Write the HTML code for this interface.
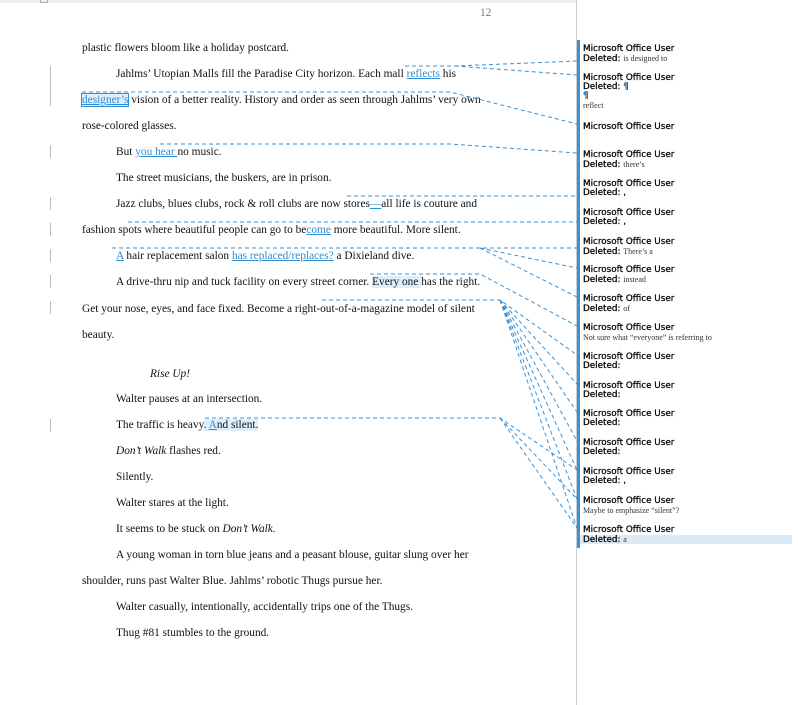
<!DOCTYPE html>
<html><head><meta charset="utf-8"><style>
body{margin:0;width:798px;height:705px;background:#fff;position:relative;overflow:hidden;font-family:"Liberation Serif",serif;}
.t{position:absolute;font-size:11.35px;color:#111;white-space:nowrap;line-height:12px;}
.b{color:#2d8fd5;text-decoration:underline;}
.cb{position:absolute;left:50px;width:1px;background:#bbb;}
.c{position:absolute;left:583px;font-family:"DejaVu Sans","Liberation Sans",sans-serif;font-size:8.8px;line-height:9px;color:#000;white-space:nowrap;-webkit-text-stroke:0.25px #000;}
.c .s{font-family:"Liberation Serif",serif;font-size:8px;color:#333;-webkit-text-stroke:0;}
</style></head><body>
<div style="position:absolute;left:0;top:0;width:576px;height:3px;background:#eee"></div>
<div style="position:absolute;left:40px;top:0;width:6px;height:2px;border:1px solid #aaa;border-top:none"></div>
<div class="t" style="left:480px;top:7px;color:#777">12</div>
<div style="position:absolute;left:576px;top:0;width:1px;height:705px;background:#ccc"></div>
<div style="position:absolute;left:577px;top:40px;width:3px;height:508px;background:#3a92d4"></div>

<div class="cb" style="top:66px;height:40px"></div>
<div class="cb" style="top:145px;height:13px"></div>
<div class="cb" style="top:197px;height:13px"></div>
<div class="cb" style="top:223px;height:13px"></div>
<div class="cb" style="top:249px;height:13px"></div>
<div class="cb" style="top:275px;height:13px"></div>
<div class="cb" style="top:301px;height:13px"></div>
<div class="cb" style="top:419px;height:13px"></div>

<div class="t" style="left:82px;top:42px">plastic flowers bloom like a holiday postcard.</div>
<div class="t" style="left:116px;top:68px">Jahlms’ Utopian Malls fill the Paradise City horizon. Each mall <span class="b">reflects</span> his</div>
<div class="t" style="left:82px;top:94px"><span class="b" style="outline:1px solid #2d8fd5;background:#dfeef9">designer’s</span> vision of a better reality. History and order as seen through Jahlms’ very own</div>
<div class="t" style="left:82px;top:120px">rose-colored glasses.</div>
<div class="t" style="left:116px;top:146px">But <span class="b">you hear </span>no music.</div>
<div class="t" style="left:116px;top:172px">The street musicians, the buskers, are in prison.</div>
<div class="t" style="left:116px;top:198px">Jazz clubs, blues clubs, rock &amp; roll clubs are now stores<span class="b">—</span>all life is couture and</div>
<div class="t" style="left:82px;top:224px">fashion spots where beautiful people can go to be<span class="b">come</span> more beautiful. More silent.</div>
<div class="t" style="left:116px;top:250px"><span class="b">A</span> hair replacement salon <span class="b">has replaced/replaces?</span> a Dixieland dive.</div>
<div class="t" style="left:116px;top:276px">A drive-thru nip and tuck facility on every street corner. <span style="background:#dfeef9">Every one </span>has the right.</div>
<div class="t" style="left:82px;top:303px">Get your nose, eyes, and face fixed. Become a right-out-of-a-magazine model of silent</div>
<div class="t" style="left:82px;top:329px">beauty.</div>
<div class="t" style="left:150px;top:368px;font-style:italic">Rise Up!</div>
<div class="t" style="left:116px;top:393px">Walter pauses at an intersection.</div>
<div class="t" style="left:116px;top:419px">The traffic is heavy<span style="background:#dfeef9">. <span class="b">A</span>nd silent.</span></div>
<div class="t" style="left:116px;top:445px"><i>Don’t Walk</i> flashes red.</div>
<div class="t" style="left:116px;top:471px">Silently.</div>
<div class="t" style="left:116px;top:497px">Walter stares at the light.</div>
<div class="t" style="left:116px;top:523px">It seems to be stuck on <i>Don’t Walk.</i></div>
<div class="t" style="left:116px;top:549px">A young woman in torn blue jeans and a peasant blouse, guitar slung over her</div>
<div class="t" style="left:82px;top:575px">shoulder, runs past Walter Blue. Jahlms’ robotic Thugs pursue her.</div>
<div class="t" style="left:116px;top:601px">Walter casually, intentionally, accidentally trips one of the Thugs.</div>
<div class="t" style="left:116px;top:627px">Thug #81 stumbles to the ground.</div>

<svg style="position:absolute;left:0;top:0" width="798" height="705">
<g stroke="#3a92d4" stroke-width="1" stroke-dasharray="4,3" fill="none">
<polyline points="405,66 455,66 577,61"/>
<polyline points="455,66 577,75"/>
<polyline points="82,92 450,92 577,124"/>
<polyline points="160,144 450,144 577,153"/>
<polyline points="347,196 577,196"/>
<polyline points="128,222 577,222"/>
<polyline points="112,248 577,248"/>
<polyline points="480,248 577,268"/>
<polyline points="480,248 577,297"/>
<polyline points="370,274 480,274 577,326"/>
<polyline points="322,300 500,300 577,355"/>
<polyline points="500,300 577,384"/>
<polyline points="500,300 577,412"/>
<polyline points="500,300 577,441"/>
<polyline points="500,300 577,470"/>
<polyline points="500,300 577,499"/>
<polyline points="500,300 577,528"/>
<polyline points="205,418 500,418 577,470"/>
<polyline points="500,418 577,499"/>
<polyline points="500,418 577,528"/>
</g></svg>

<div style="position:absolute;left:580px;top:535px;width:212px;height:9px;background:#dceaf5"></div>
<div class="c" style="top:45px">Microsoft Office User<br>Deleted: <span class="s">is designed to</span></div>
<div class="c" style="top:74px">Microsoft Office User<br>Deleted: <span style="color:#3a92d4">¶</span><br><span style="color:#3a92d4">¶</span><br><span class="s">reflect</span></div>
<div class="c" style="top:123px">Microsoft Office User</div>
<div class="c" style="top:151px">Microsoft Office User<br>Deleted: <span class="s">there’s</span></div>
<div class="c" style="top:180px">Microsoft Office User<br>Deleted: ,</div>
<div class="c" style="top:209px">Microsoft Office User<br>Deleted: ,</div>
<div class="c" style="top:238px">Microsoft Office User<br>Deleted: <span class="s">There’s a</span></div>
<div class="c" style="top:266px">Microsoft Office User<br>Deleted: <span class="s">instead</span></div>
<div class="c" style="top:295px">Microsoft Office User<br>Deleted: <span class="s">of</span></div>
<div class="c" style="top:324px">Microsoft Office User<br><span class="s">Not sure what “everyone” is referring to</span></div>
<div class="c" style="top:353px">Microsoft Office User<br>Deleted:</div>
<div class="c" style="top:382px">Microsoft Office User<br>Deleted:</div>
<div class="c" style="top:410px">Microsoft Office User<br>Deleted:</div>
<div class="c" style="top:439px">Microsoft Office User<br>Deleted:</div>
<div class="c" style="top:468px">Microsoft Office User<br>Deleted: ,</div>
<div class="c" style="top:497px">Microsoft Office User<br><span class="s">Maybe to emphasize “silent”?</span></div>
<div class="c" style="top:526px">Microsoft Office User<br>Deleted: <span class="s">a</span></div>
</body></html>
